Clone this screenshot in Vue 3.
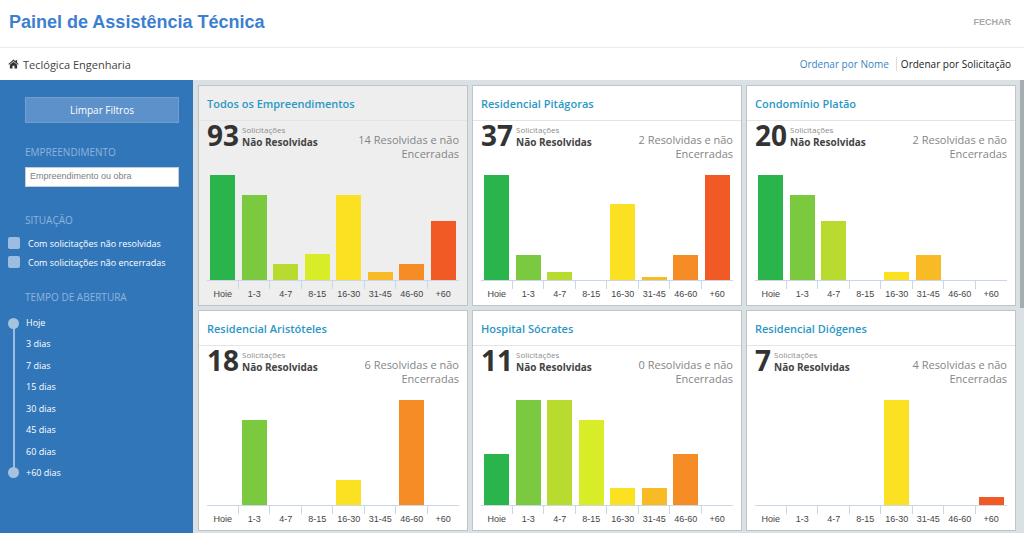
<script setup>
import { ref } from 'vue'

const ranges = [
  { label: 'Hoie', color: '#2ab54c' },
  { label: '1-3', color: '#7bc93e' },
  { label: '4-7', color: '#b9db2f' },
  { label: '8-15', color: '#d9ec28' },
  { label: '16-30', color: '#fbe122' },
  { label: '31-45', color: '#f8bb25' },
  { label: '46-60', color: '#f58c25' },
  { label: '+60', color: '#f15a25' },
]

const cards = [
  { name: 'Todos os Empreendimentos', open: 93, resolved: 14, bars: [105, 85, 16, 26, 85, 8, 16, 59], selected: true },
  { name: 'Residencial Pitágoras', open: 37, resolved: 2, bars: [105, 25, 8, 0, 76, 3, 25, 105] },
  { name: 'Condomínio Platão', open: 20, resolved: 2, bars: [105, 85, 59, 0, 8, 25, 0, 0] },
  { name: 'Residencial Aristóteles', open: 18, resolved: 6, bars: [0, 85, 0, 0, 25, 0, 105, 0] },
  { name: 'Hospital Sócrates', open: 11, resolved: 0, bars: [51, 105, 105, 85, 17, 17, 51, 0] },
  { name: 'Residencial Diógenes', open: 7, resolved: 4, bars: [0, 0, 0, 0, 105, 0, 0, 8] },
]

const peak = 105
const days = ['Hoje', '3 dias', '7 dias', '15 dias', '30 dias', '45 dias', '60 dias', '+60 dias']
const search = ref('')
const unresolved = ref(false)
const unclosed = ref(false)
const from = ref(0)
const to = ref(7)

function reset() {
  search.value = ''
  unresolved.value = false
  unclosed.value = false
  from.value = 0
  to.value = 7
}
</script>

<template>
  <div class="page">
    <header class="top">
      <h1>Painel de Assistência Técnica</h1>
      <button type="button" class="close">FECHAR</button>
    </header>
    <nav class="bar">
      <div class="crumb">
        <svg class="home" viewBox="0 0 20 18" aria-hidden="true">
          <path d="M10 1 0.6 9 1.8 10.3 10 3.4 18.2 10.3 19.4 9 16.6 6.6V2H13.8V4.2Z" />
          <path d="M3.4 10.2 10 4.8 16.6 10.2V17H11.8V12H8.2V17H3.4Z" />
        </svg>
        <span>Teclógica Engenharia</span>
      </div>
      <div class="sort">
        <a href="#nome">Ordenar por Nome</a>
        <a href="#solicitacao" class="current">Ordenar por Solicitação</a>
      </div>
    </nav>
    <div class="body">
      <aside class="side">
        <button type="button" class="clear" @click="reset">Limpar Filtros</button>
        <label class="caption" for="obra">EMPREENDIMENTO</label>
        <input id="obra" v-model="search" class="search" type="text" placeholder="Empreendimento ou obra">
        <h2 class="caption situation">SITUAÇÃO</h2>
        <label class="check"><input v-model="unresolved" type="checkbox"><span>Com solicitações não resolvidas</span></label>
        <label class="check"><input v-model="unclosed" type="checkbox"><span>Com solicitações não encerradas</span></label>
        <h2 class="caption period">TEMPO DE ABERTURA</h2>
        <div class="slider">
          <div class="rail">
            <input v-model="from" type="range" min="0" max="7" aria-label="Tempo de abertura mínimo">
            <input v-model="to" type="range" min="0" max="7" aria-label="Tempo de abertura máximo">
          </div>
          <ul>
            <li v-for="d in days" :key="d">{{ d }}</li>
          </ul>
        </div>
      </aside>
      <main class="content">
        <section v-for="c in cards" :key="c.name" class="card" :class="{ selected: c.selected }">
          <h3>{{ c.name }}</h3>
          <div class="summary">
            <strong class="count">{{ c.open }}</strong>
            <p class="open"><span>Solicitações</span><b>Não Resolvidas</b></p>
            <p class="resolved">{{ c.resolved }} Resolvidas e não Encerradas</p>
          </div>
          <div class="chart">
            <div v-for="(r, i) in ranges" :key="r.label" class="col">
              <div class="plot">
                <div class="fill" :style="{ height: (c.bars[i] / peak) * 100 + '%', background: r.color }"></div>
              </div>
              <span class="tick">{{ r.label }}</span>
            </div>
          </div>
        </section>
      </main>
      <div class="scroll"><div class="thumb"></div></div>
    </div>
  </div>
</template>

<style>
body {
  background: #fff;
}
</style>

<style scoped>
.page {
  display: flex;
  flex-direction: column;
  min-height: 100vh;
  font-family: "Open Sans", "Noto Sans", sans-serif;
  font-size: 11px;
  color: #444;
}
.page * {
  box-sizing: border-box;
}
h1, h2, h3, p, ul {
  margin: 0;
  padding: 0;
}
button {
  font-family: inherit;
  cursor: pointer;
}
.top {
  display: flex;
  align-items: center;
  justify-content: space-between;
  height: 48px;
  padding: 0 13px 4px 9px;
  border-bottom: 1px solid #e9ebec;
}
h1 {
  font: bold 18px/24px "Liberation Sans", Arial, sans-serif;
  color: #3c7fd0;
}
.close {
  padding: 0;
  border: 0;
  background: none;
  font: bold 9px/14px "Liberation Sans", Arial, sans-serif;
  color: #a9a9a9;
}
.bar {
  display: flex;
  align-items: center;
  justify-content: space-between;
  height: 32px;
  padding: 0 13px 0 8px;
}
.crumb {
  display: flex;
  align-items: center;
  gap: 4px;
}
.home {
  width: 11px;
  height: 10px;
  fill: #333;
}
.sort {
  display: flex;
  font-size: 10px;
}
.sort a {
  color: #3a84c6;
  text-decoration: none;
  line-height: 14px;
}
.sort .current {
  margin-left: 7px;
  padding-left: 4px;
  border-left: 1px solid #ddd;
  color: #222;
}
.body {
  display: flex;
  flex: 1;
  background: #dae1e4;
}
.side {
  flex: 0 0 193px;
  padding: 17px 14px 0 8px;
  background: #3276ba;
  color: #fff;
}
.clear {
  display: block;
  width: 154px;
  height: 26px;
  margin: 0 0 21px 17px;
  padding: 0;
  border: 1px solid #709fd0;
  background: #5c91ca;
  color: #fff;
  font-size: 10px;
}
.caption {
  display: block;
  margin-left: 17px;
  color: #8db4dc;
  font-size: 10px;
  font-weight: 400;
  line-height: 16px;
}
.search {
  display: block;
  width: 154px;
  height: 20px;
  margin: 7px 0 0 17px;
  padding: 0 4px 2px;
  border: 1px solid #c5ccd2;
  border-radius: 0;
  background: #fff;
  color: #333;
  font: 9px "Liberation Sans", Arial, sans-serif;
}
.search::placeholder {
  color: #808080;
  opacity: 1;
}
.situation {
  margin-top: 25px;
  margin-bottom: 6px;
}
.check {
  display: flex;
  align-items: center;
  gap: 8px;
  height: 19px;
  font-size: 9px;
}
.check input {
  appearance: none;
  width: 12px;
  height: 12px;
  margin: 0 0 2px;
  border-radius: 2px;
  background: #9dbde0;
}
.check input:checked {
  background: #fff;
}
.period {
  margin-top: 17px;
}
.slider {
  display: flex;
  gap: 7px;
  margin-top: 8px;
  font-size: 9px;
}
.rail {
  display: grid;
  width: 11px;
  height: 160px;
  margin-top: 5px;
  background: linear-gradient(#9dbde0, #9dbde0) center / 2px 150px no-repeat;
}
.rail input {
  grid-area: 1 / 1;
  appearance: none;
  writing-mode: vertical-lr;
  width: 11px;
  height: 160px;
  margin: 0;
  background: none;
  pointer-events: none;
}
.rail input::-webkit-slider-thumb {
  appearance: none;
  width: 11px;
  height: 11px;
  border-radius: 50%;
  background: #a5c2df;
  pointer-events: auto;
}
.slider ul {
  display: flex;
  flex-direction: column;
  justify-content: space-between;
  height: 170px;
  list-style: none;
}
.slider li {
  line-height: 20px;
}
.content {
  display: grid;
  flex: 1;
  grid-template-columns: repeat(3, minmax(0, 1fr));
  align-content: start;
  gap: 4px;
  padding: 5px 4px 2px 5px;
}
.card {
  border: 1px solid #bfc4c6;
  background: #fff;
}
.card.selected {
  background: #eee;
}
h3 {
  height: 35px;
  padding-left: 8px;
  border-bottom: 1px solid #e2e4e5;
  color: #2b97c4;
  font-size: 11px;
  font-weight: 600;
  line-height: 35px;
}
.summary {
  display: flex;
  height: 54px;
  padding: 0 8px;
}
.count {
  color: #333;
  font-size: 28px;
  line-height: 28px;
}
.open {
  margin-left: 3px;
  padding-top: 2px;
}
.open span,
.open b {
  display: block;
  font-size: 10px;
  line-height: 13px;
}
.open span {
  color: #8c8c8c;
  font-size: 8px;
}
.resolved {
  width: 104px;
  margin-left: auto;
  padding-top: 12px;
  color: #858585;
  font-size: 11px;
  line-height: 14px;
  text-align: right;
}
.chart {
  display: grid;
  grid-template-columns: repeat(8, minmax(0, 1fr));
  margin: 0 8px;
}
.plot {
  display: flex;
  align-items: flex-end;
  justify-content: center;
  height: 106px;
  border-bottom: 1px solid #c9d8e6;
}
.fill {
  width: 80%;
}
.tick {
  display: block;
  height: 24px;
  padding-top: 7px;
  background: linear-gradient(#c9d8e6, #c9d8e6) right top / 1px 8px no-repeat;
  font: 9px/12px "Liberation Sans", Arial, sans-serif;
  color: #444;
  text-align: center;
}
.col:last-child .tick {
  background: none;
}
.scroll {
  flex: 0 0 4px;
}
.thumb {
  height: 228px;
  background: #a6adb1;
}
</style>
